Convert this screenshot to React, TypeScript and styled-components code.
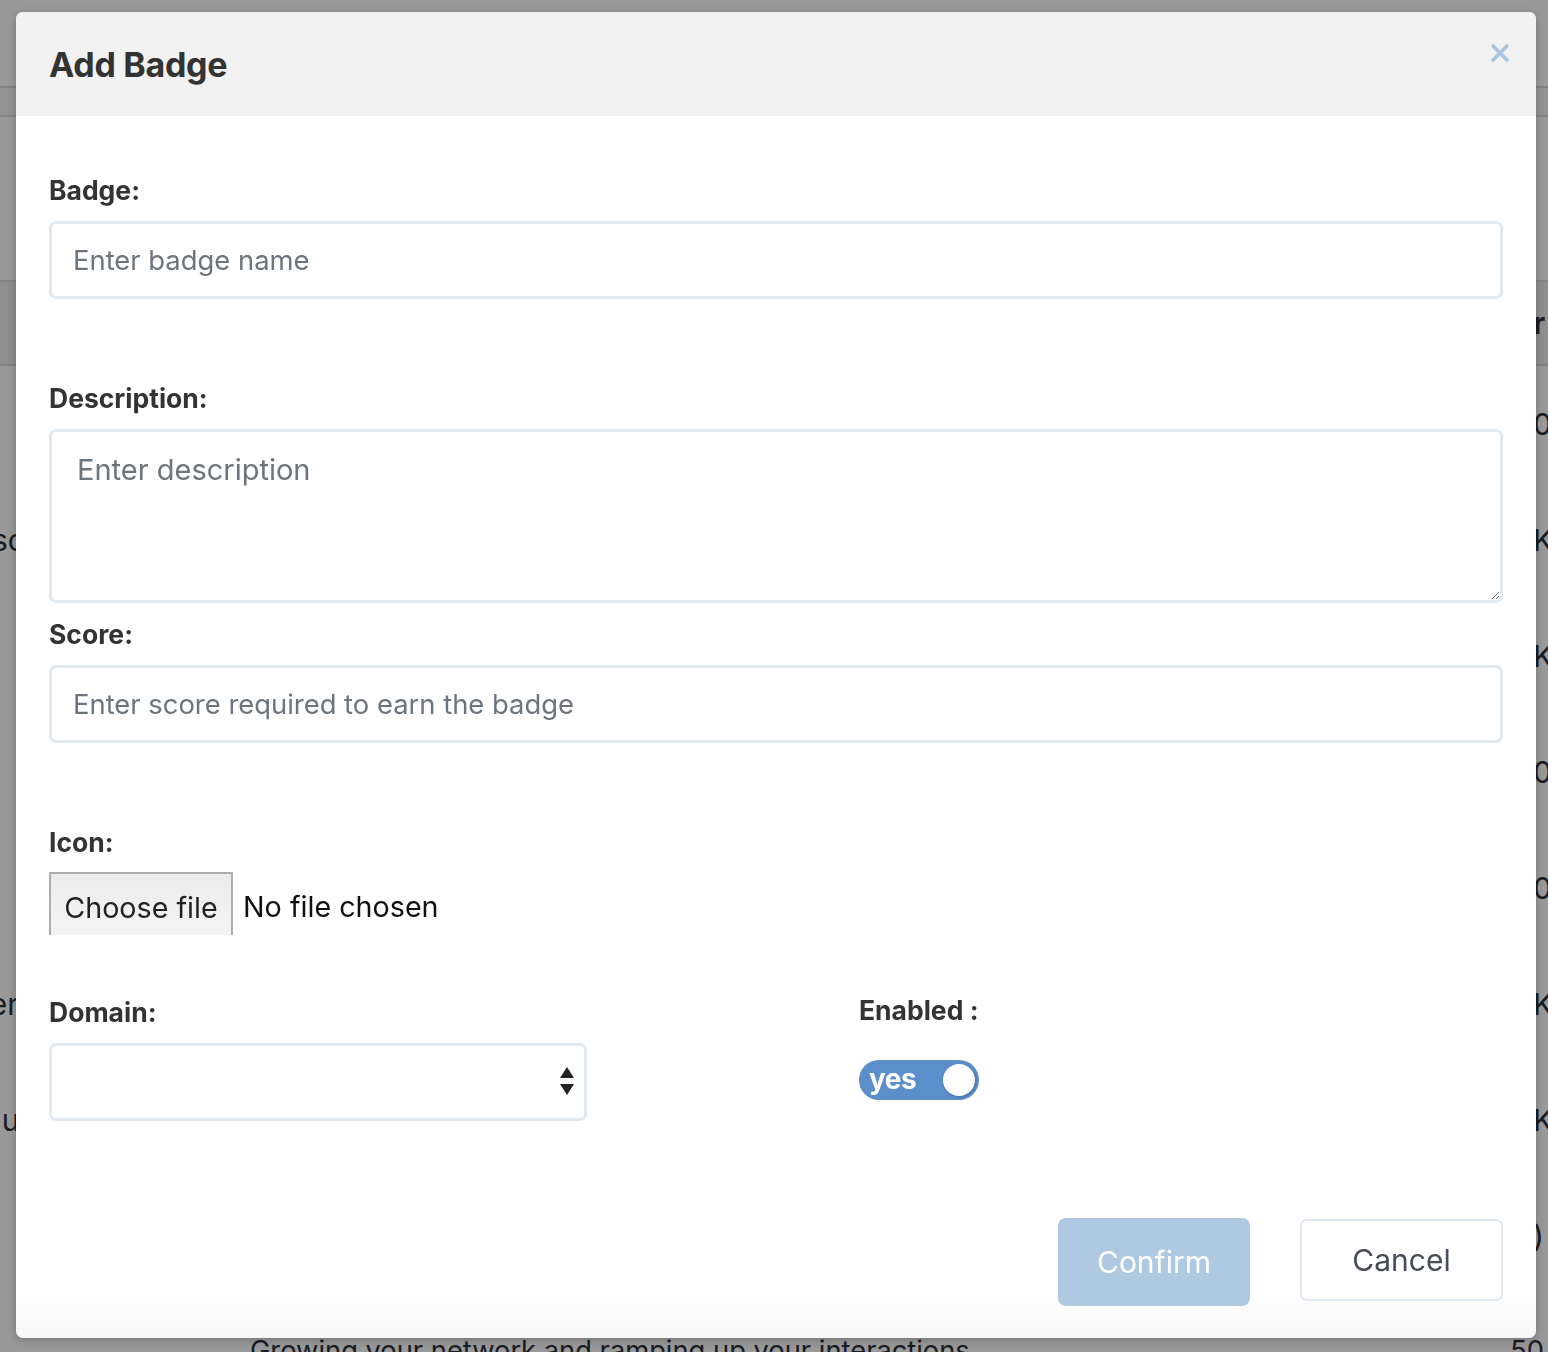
import React from "react";
import styled, { createGlobalStyle } from "styled-components";

const Global = createGlobalStyle`
  html, body { margin: 0; padding: 0; }
  body { font-family: Inter, "Noto Sans", "Liberation Sans", sans-serif; background: #fff; }
  * { box-sizing: border-box; }
`;

const Page = styled.div`
  position: relative;
  width: 1548px;
  height: 1352px;
  overflow: hidden;
  background: #fff;
  color: #333;
`;

const NavBar = styled.div`
  height: 88px;
  border-bottom: 2px solid #d8d8d8;
  background: #fff;
`;

const SubBar = styled.div`
  height: 29px;
  background: #f6f6f6;
  border-bottom: 2px solid #e0e0e0;
`;

const Spacer = styled.div<{ h: number }>`
  height: ${(p) => p.h}px;
`;

const TableHead = styled.div`
  height: 86px;
  background: #eeeeee;
  border-top: 2px solid #dcdcdc;
  border-bottom: 2px solid #dcdcdc;
  display: flex;
  align-items: center;
  justify-content: space-between;
  font-weight: 700;
  font-size: 30px;
`;

const TableRow = styled.div`
  height: 116px;
  display: flex;
  align-items: center;
  justify-content: space-between;
  font-size: 30px;
  color: #2b2f3a;
`;

const LeftCell = styled.div`
  width: 25px;
  overflow: hidden;
  white-space: pre;
  display: flex;
  justify-content: flex-end;
`;

const RightCell = styled.div`
  width: 16px;
  overflow: hidden;
  white-space: nowrap;
  padding-left: 1px;
`;

const BottomRow = styled.div`
  display: flex;
  align-items: flex-start;
  height: 80px;
  font-size: 27.3px;
  color: #2b2f3a;
  padding-left: 250px;
  padding-top: 40px;
  justify-content: space-between;
`;

const BottomNumber = styled.span`
  padding-right: 4px;
`;

const Overlay = styled.div`
  position: fixed;
  inset: 0;
  background: rgba(0, 0, 0, 0.4);
`;

const Modal = styled.div`
  position: absolute;
  left: 16px;
  top: 12px;
  width: 1520px;
  height: 1326px;
  background: linear-gradient(to bottom, #fff 0, #fff 1280px, #f7f7f7 1326px);
  border-radius: 7px;
  box-shadow: 0 2px 8px rgba(0, 0, 0, 0.25);
  overflow: hidden;
  display: flex;
  flex-direction: column;
`;

const Header = styled.div`
  height: 104px;
  background: #f2f2f2;
  display: flex;
  align-items: center;
  justify-content: space-between;
  padding: 0 25px 0 33px;
  position: relative;
`;

const Title = styled.h2`
  margin: 0;
  font-size: 34px;
  font-weight: 700;
  color: #333;
  letter-spacing: -0.3px;
  line-height: 1;
  padding-top: 2px;
`;

const CloseButton = styled.button`
  position: absolute;
  right: 26px;
  top: 30px;
  width: 20px;
  height: 22px;
  border: none;
  background: none;
  padding: 0;
  cursor: pointer;
`;

const Body = styled.div`
  padding: 56px 33px 32px;
  display: flex;
  flex-direction: column;
`;

const Group = styled.div<{ mb: number }>`
  display: flex;
  flex-direction: column;
  margin-bottom: ${(p) => p.mb}px;
`;

const Label = styled.label<{ mb?: number }>`
  display: block;
  font-size: 26.5px;
  font-weight: 700;
  line-height: 36px;
  color: #333;
  margin-bottom: ${(p) => (p.mb ?? 13)}px;
`;

const TextInput = styled.input`
  width: 100%;
  height: 78px;
  border: 3px solid #e2e8ef;
  border-radius: 7px;
  padding: 0 21px;
  font-family: inherit;
  font-size: 27.4px;
  color: #495057;
  outline: none;
  &::placeholder { color: #6c757d; }
`;

const TextArea = styled.textarea`
  width: 100%;
  height: 174px;
  border: 3px solid #e2e8ef;
  border-radius: 7px;
  padding: 20px 25px;
  font-family: inherit;
  font-size: 29px;
  line-height: 36px;
  color: #495057;
  outline: none;
  resize: vertical;
  &::placeholder { color: #6c757d; }
`;

const FileRow = styled.div`
  display: flex;
  align-items: center;
  height: 63px;
  gap: 10px;
  font-size: 28.7px;
`;

const FileButton = styled.span`
  height: 63px;
  width: 184px;
  display: flex;
  align-items: center;
  justify-content: center;
  padding-top: 5px;
  border: 2px solid #adadad;
  border-bottom: none;
  background: linear-gradient(to bottom, #ececec, #f4f4f4);
  color: #222;
`;

const FileText = styled.span`
  color: #111;
  padding-top: 5px;
`;

const SplitRow = styled.div`
  display: grid;
  grid-template-columns: 538px 1fr;
  column-gap: 272px;
  margin-top: 59px;
`;

const SelectBox = styled.div`
  height: 78px;
  border: 3px solid #e2e8ef;
  border-radius: 7px;
  display: flex;
  align-items: center;
  justify-content: flex-end;
  padding-right: 9px;
`;

const EnabledCol = styled.div`
  margin-top: -2px;
`;

const Toggle = styled.div`
  width: 120px;
  height: 40px;
  border-radius: 20px;
  background: #5b8fca;
  display: flex;
  align-items: center;
  justify-content: space-between;
  padding: 0 4px 0 10px;
`;

const ToggleText = styled.span`
  color: #fff;
  font-weight: 700;
  font-size: 28px;
  letter-spacing: -0.5px;
  line-height: 1;
  margin-top: -3px;
`;

const Knob = styled.span`
  width: 32px;
  height: 32px;
  border-radius: 50%;
  background: #fff;
  box-shadow: 1px 1px 3px rgba(0, 0, 0, 0.25);
`;

const Footer = styled.div`
  display: flex;
  justify-content: flex-end;
  align-items: flex-start;
  gap: 50px;
  margin-top: 97px;
`;

const ConfirmButton = styled.button`
  width: 192px;
  height: 88px;
  border: none;
  border-radius: 8px;
  background: #b0c9e2;
  color: #fff;
  font-family: inherit;
  font-size: 30px;
  cursor: pointer;
`;

const CancelButton = styled.button`
  width: 203px;
  height: 82px;
  margin-top: 1px;
  border: 2px solid #e2e8ef;
  border-radius: 7px;
  background: #fff;
  color: #454c5a;
  font-family: inherit;
  font-size: 30px;
  cursor: pointer;
`;

const leftTexts = ["", "Misc", "", "", "", "Ken", "u\u2009", "", ""];
const rightTexts = ["0", "K", "K", "0", "0", "K", "K", ")"];

export default function App() {
  return (
    <>
      <Global />
      <Page>
        <NavBar />
        <SubBar />
        <Spacer h={163} />
        <TableHead>
          <LeftCell></LeftCell>
          <RightCell>r</RightCell>
        </TableHead>
        {rightTexts.map((r, i) => (
          <TableRow key={i}>
            <LeftCell>{leftTexts[i] ?? ""}</LeftCell>
            <RightCell>{r}</RightCell>
          </TableRow>
        ))}
        <BottomRow>
          <span>Growing your network and ramping up your interactions</span>
          <BottomNumber>50</BottomNumber>
        </BottomRow>
        <Overlay />
        <Modal>
          <Header>
            <Title>Add Badge</Title>
            <CloseButton aria-label="Close">
              <svg width="20" height="22" viewBox="0 0 20 22">
                <path d="M2 3 L18 19 M18 3 L2 19" stroke="#a9c5e2" strokeWidth="3.6" strokeLinecap="butt" fill="none" />
              </svg>
            </CloseButton>
          </Header>
          <Body>
            <Group mb={81}>
              <Label>Badge:</Label>
              <TextInput placeholder="Enter badge name" />
            </Group>
            <Group mb={13}>
              <Label>Description:</Label>
              <TextArea placeholder="Enter description" />
            </Group>
            <Group mb={81}>
              <Label>Score:</Label>
              <TextInput placeholder="Enter score required to earn the badge" />
            </Group>
            <Group mb={0}>
              <Label mb={12}>Icon:</Label>
              <FileRow>
                <FileButton>Choose file</FileButton>
                <FileText>No file chosen</FileText>
              </FileRow>
            </Group>
            <SplitRow>
              <div>
                <Label>Domain:</Label>
                <SelectBox>
                  <svg width="16" height="32" viewBox="0 0 16 32">
                    <path d="M1 12 L8 1 L15 12 Z" fill="#222" />
                    <path d="M1 18 L15 18 L8 29 Z" fill="#222" />
                  </svg>
                </SelectBox>
              </div>
              <EnabledCol>
                <Label mb={32}>Enabled :</Label>
                <Toggle>
                  <ToggleText>yes</ToggleText>
                  <Knob />
                </Toggle>
              </EnabledCol>
            </SplitRow>
            <Footer>
              <ConfirmButton>Confirm</ConfirmButton>
              <CancelButton>Cancel</CancelButton>
            </Footer>
          </Body>
        </Modal>
      </Page>
    </>
  );
}
